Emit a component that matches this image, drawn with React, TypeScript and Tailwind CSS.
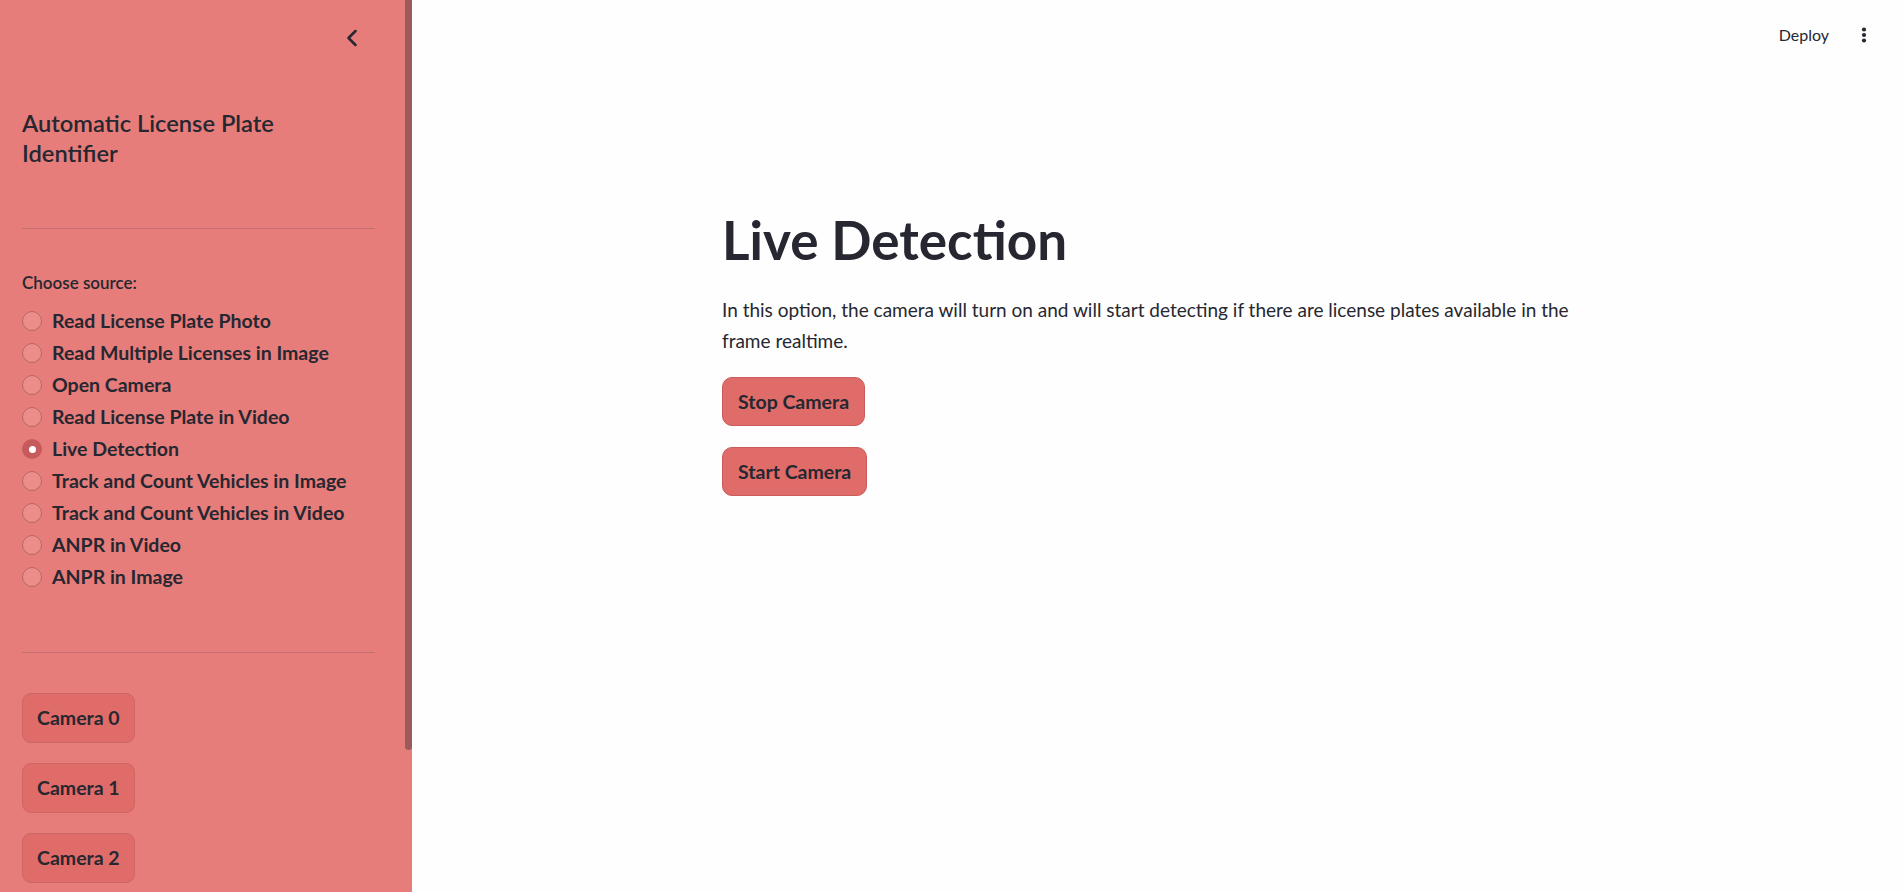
import { useState } from "react";
import { ChevronLeft } from "lucide-react";

const sources = [
  "Read License Plate Photo",
  "Read Multiple Licenses in Image",
  "Open Camera",
  "Read License Plate in Video",
  "Live Detection",
  "Track and Count Vehicles in Image",
  "Track and Count Vehicles in Video",
  "ANPR in Video",
  "ANPR in Image",
];

const cameras = ["Camera 0", "Camera 1", "Camera 2"];

const Radio = ({ checked }: { checked: boolean }) =>
  checked ? (
    <span className="flex h-[20px] w-[20px] shrink-0 items-center justify-center rounded-full bg-[#c75a5c]">
      <span className="h-[7px] w-[7px] rounded-full bg-white" />
    </span>
  ) : (
    <span className="h-[20px] w-[20px] shrink-0 rounded-full border border-[#b46868] bg-[#ec8d8a]" />
  );

const App = () => {
  const [source, setSource] = useState("Live Detection");

  return (
    <div className="flex h-[892px] overflow-hidden bg-[#fefefe] font-[Lato,sans-serif] text-[#262730]">
      {/* sidebar */}
      <div className="flex w-[412px] shrink-0 bg-[#e77d7b]">
        <div className="flex flex-1 flex-col pl-[22px] pr-[30px]">
          <div className="flex h-[76px] items-center justify-end pr-[9px]">
            <ChevronLeft size={28} strokeWidth={2.2} className="text-[#262730]" />
          </div>

          <h2 className="mt-[32px] text-[23.7px] font-semibold leading-[30px]">
            Automatic License Plate
            <br />
            Identifier
          </h2>

          <div className="mt-[60px] h-px bg-[#c36e6f]" />

          <p className="mt-[43px] text-[17px] font-semibold leading-[22px]">Choose source:</p>

          <div className="mt-[11px] flex flex-col">
            {sources.map((s) => (
              <label
                key={s}
                className="flex h-[32px] cursor-pointer items-center gap-[10px]"
                onClick={() => setSource(s)}>
                <Radio checked={source === s} />
                <span className="text-[19.5px] font-bold leading-[32px]">{s}</span>
              </label>
            ))}
          </div>

          <div className="mt-[59px] h-px bg-[#c36e6f]" />

          <div className="mt-[40px] flex flex-col items-start gap-[20px]">
            {cameras.map((c) => (
              <button
                key={c}
                className="h-[50px] rounded-[9px] border border-[#cc6563] bg-[#e06c6a] px-[14px] text-[19.5px] font-bold">
                {c}
              </button>
            ))}
          </div>
        </div>
        <div className="w-[7px]">
          <div className="h-[750px] rounded-b-full bg-[#9b5a5b]" />
        </div>
      </div>

      {/* main */}
      <div className="flex flex-1 flex-col pr-[9px]">
        <div className="flex h-[70px] items-center justify-end gap-[25px] pr-[20px]">
          <span className="text-[16px] leading-[20px]">Deploy</span>
          <svg width="20" height="20" viewBox="0 0 20 20" className="text-[#262730]">
            <circle cx="10" cy="4.5" r="2.1" fill="currentColor" />
            <circle cx="10" cy="10" r="2.1" fill="currentColor" />
            <circle cx="10" cy="15.5" r="2.1" fill="currentColor" />
          </svg>
        </div>

        <div className="mx-auto flex w-[862px] flex-col items-start pt-[138px]">
          <h1 className="text-[53px] font-bold leading-[64px]">Live Detection</h1>
          <p className="mt-[22px] text-[19px] leading-[31px]">
            In this option, the camera will turn on and will start detecting if there are license plates available in the frame realtime.
          </p>
          <button className="mt-[21px] h-[49px] rounded-[10px] border border-[#c95b5a] bg-[#e06c69] px-[15px] text-[19.5px] font-bold">
            Stop Camera
          </button>
          <button className="mt-[21px] h-[49px] rounded-[10px] border border-[#c95b5a] bg-[#e06c69] px-[15px] text-[19.5px] font-bold">
            Start Camera
          </button>
        </div>
      </div>
    </div>
  );
};

export default App;
